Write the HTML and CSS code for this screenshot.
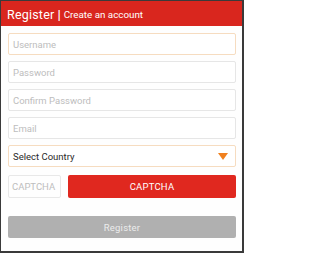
FILE: index.html
```html
<!DOCTYPE html>
<html>
<head>
<meta charset="utf-8">
<link rel="stylesheet" href="styles.css">
</head>
<body>
<div class="frame">
  <div class="header">
    <span class="title">Register</span>
    <span class="sep">|</span>
    <span class="subtitle">Create an account</span>
  </div>
  <div class="form">
    <div class="field focus"><span class="ph">Username</span></div>
    <div class="field"><span class="ph">Password</span></div>
    <div class="field"><span class="ph">Confirm Password</span></div>
    <div class="field"><span class="ph">Email</span></div>
    <div class="field focus select">
      <span class="val">Select Country</span>
      <svg class="arrow" width="10" height="7" viewBox="0 0 10 7"><polygon points="0,0 10,0 5,7" fill="#f0801e"/></svg>
    </div>
    <div class="captcha-row">
      <div class="captcha-input"><span class="ph">CAPTCHA</span></div>
      <div class="captcha-btn">CAPTCHA</div>
    </div>
    <div class="register-btn">Register</div>
  </div>
</div>
</body>
</html>
```

FILE: styles.css
```css
html, body {
  margin: 0;
  padding: 0;
  background: #ffffff;
}
body {
  width: 244px;
  height: 253px;
  font-family: Roboto, "Liberation Sans", Arial, sans-serif;
}
.frame {
  box-sizing: border-box;
  width: 244px;
  height: 253px;
  border-style: solid;
  border-color: #3a3a3a;
  border-width: 1px 2px 2px 1px;
  background: #fefefe;
}
.header {
  height: 25px;
  background: #d9261e;
  color: #ffffff;
  display: flex;
  align-items: center;
  padding-left: 6px;
  padding-top: 1px;
  box-sizing: border-box;
}
.title {
  font-size: 12.5px;
  letter-spacing: 0.2px;
}
.sep {
  font-size: 13px;
  font-weight: bold;
  margin: 0 3px 0 3px;
}
.subtitle {
  font-size: 9.8px;
}
.form {
  padding: 7px 6px 0 7px;
  display: flex;
  flex-direction: column;
  gap: 6px;
}
.field {
  box-sizing: border-box;
  height: 22px;
  border: 1px solid #e6e6e6;
  border-radius: 2px;
  display: flex;
  align-items: center;
  padding-left: 4px;
  background: #ffffff;
}
.field.focus {
  border-color: #f6dcc0;
}
.ph {
  font-size: 9.5px;
  color: #bdbdbd;
}
.select {
  justify-content: space-between;
  padding-right: 7px;
}
.val {
  font-size: 9.5px;
  color: #2a2a2a;
}
.arrow {
  display: block;
}
.captcha-row {
  margin-top: 2px;
  display: flex;
  gap: 7px;
  height: 23px;
}
.captcha-input {
  box-sizing: border-box;
  width: 53px;
  border: 1px solid #e8e8e8;
  border-radius: 2px;
  display: flex;
  align-items: center;
  padding-left: 3px;
}
.captcha-btn {
  flex: 1;
  background: #e0281f;
  border-radius: 2px;
  color: #ffffff;
  font-size: 9.5px;
  display: flex;
  align-items: center;
  justify-content: center;
  letter-spacing: 0.2px;
}
.register-btn {
  margin-top: 12px;
  height: 22px;
  background: #b0b0b0;
  border-radius: 2px;
  color: #ececec;
  font-size: 9.5px;
  display: flex;
  align-items: center;
  justify-content: center;
  letter-spacing: 0.2px;
}
```
